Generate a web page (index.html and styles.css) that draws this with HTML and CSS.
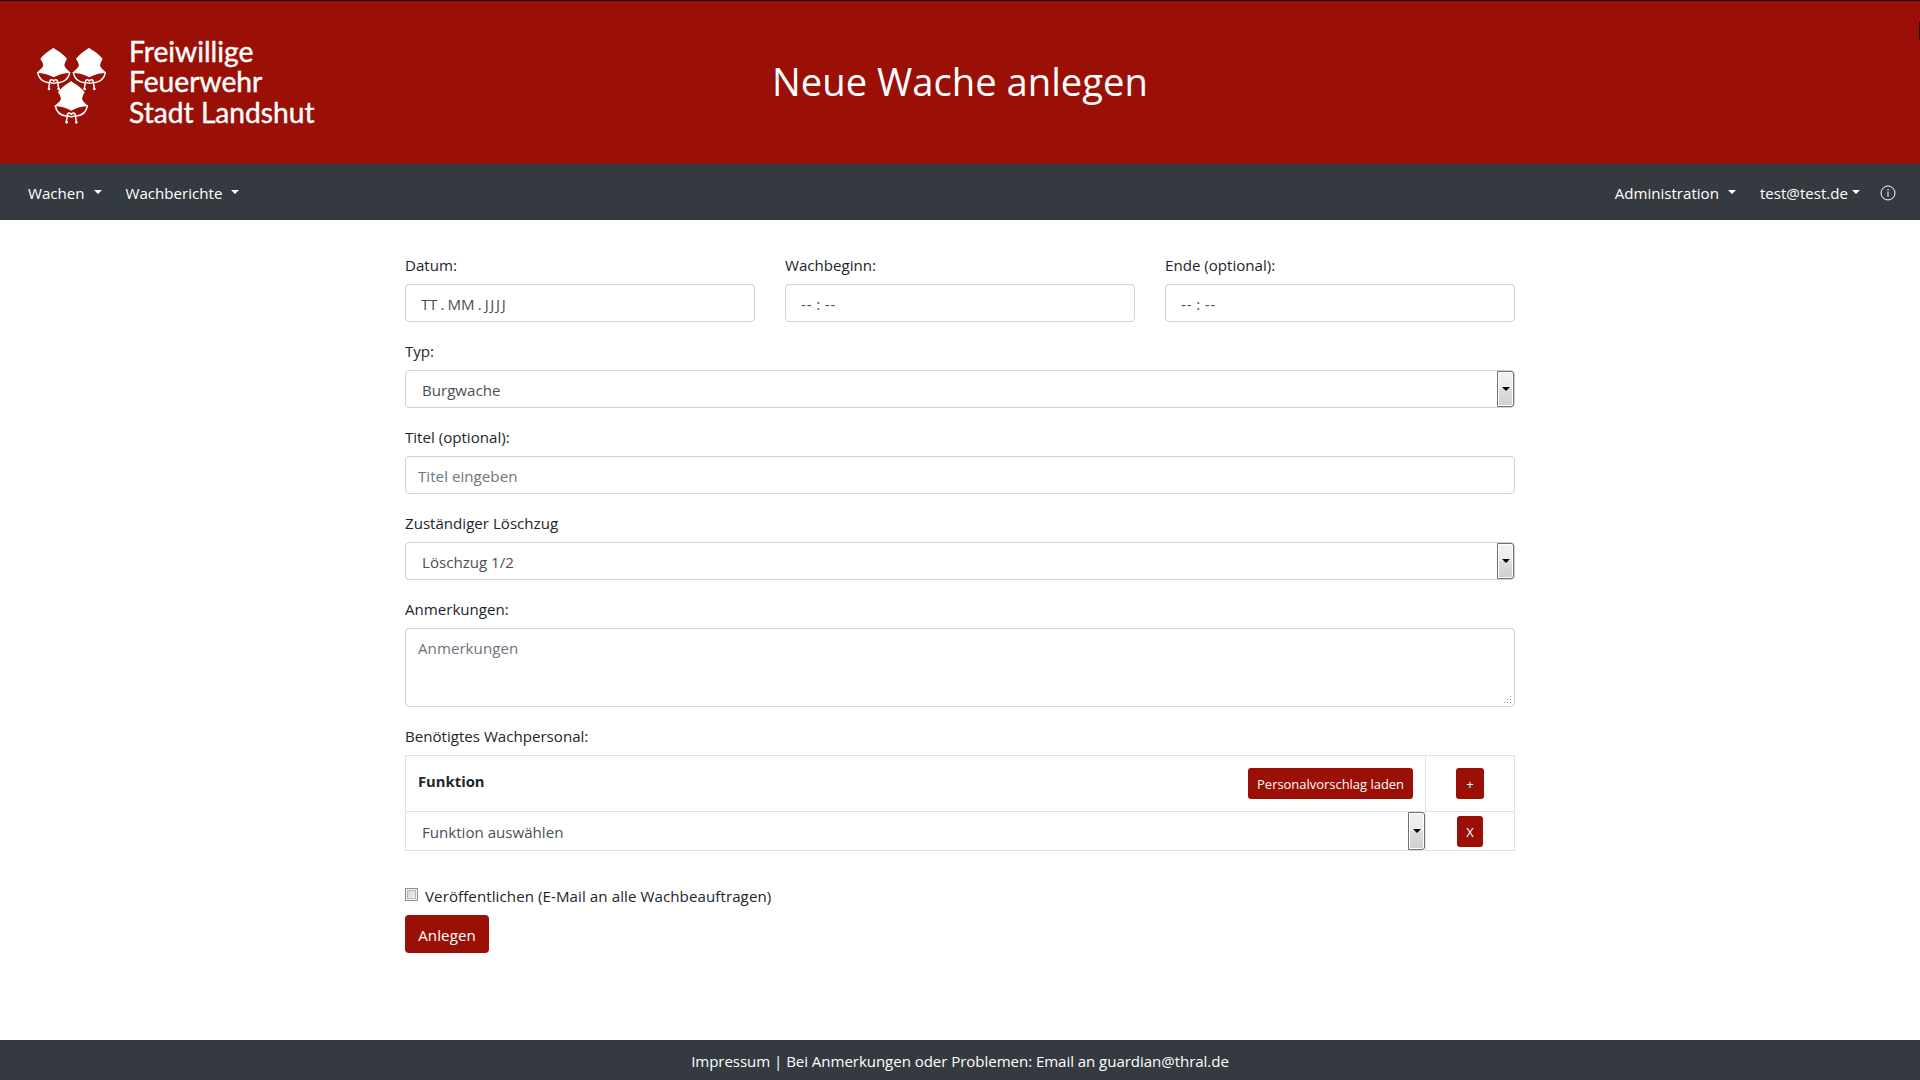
FILE: index.html
```
<!DOCTYPE html>
<html lang="de">
<head>
<meta charset="utf-8">
<title>Neue Wache anlegen</title>
<link rel="stylesheet" href="styles.css">
</head>
<body>
<header class="banner">
  <div class="brand">
    <svg class="brand-mark" viewBox="108 141 213 231" aria-hidden="true">
      <defs>
        <g id="hat">
          <path fill="#fff" d="M160 143C166 149 188 158 201 177Q194 187 193 196C195 204 203 210 212 218Q184 219 161 232Q138 219 110 218C119 210 128 204 130 196Q129 187 121 177C134 158 154 149 160 143Z"/>
          <path fill="none" stroke="#fff" stroke-width="4.5" stroke-linecap="round" d="M113 218Q118 245 146 248M209 218Q204 245 176 248M146 265L149 247C149 237 160 237 161 245C162 237 173 237 173 247L176 265M152 248Q161 252 170 248"/>
          <circle cx="147" cy="267" r="4" fill="#fff"/><circle cx="176" cy="267" r="4" fill="#fff"/>
        </g>
      </defs>
      <use href="#hat"/><use href="#hat" x="107"/><use href="#hat" x="53" y="100"/>
    </svg>
    <div class="brand-name">Freiwillige<br>Feuerwehr<br>Stadt Landshut</div>
  </div>
  <h1 class="title">Neue Wache anlegen</h1>
  <span class="edge-mark"></span>
</header>
<nav class="navbar">
  <div class="nav-group">
    <a class="nav-link">Wachen<i class="caret"></i></a>
    <a class="nav-link">Wachberichte<i class="caret"></i></a>
  </div>
  <div class="nav-group">
    <a class="nav-link">Administration<i class="caret"></i></a>
    <a class="nav-link tight">test@test.de<i class="caret"></i></a>
    <a class="nav-link">
      <svg class="info" viewBox="0 0 16 16"><circle cx="8" cy="8" r="7" fill="none" stroke="currentColor"/><path fill="currentColor" d="M7.4 4h1.3v1.3H7.4zM7.5 6.5h1v5.2h-1z"/></svg>
    </a>
  </div>
</nav>
<main class="content">
  <div class="row">
    <div class="group"><label>Datum:</label><div class="field inset"><span class="date"><span>TT</span><span>.</span><span>MM</span><span>.</span><span class="year">JJJJ</span></span></div></div>
    <div class="group"><label>Wachbeginn:</label><div class="field inset"><span class="time"><span>--</span><span>:</span><span>--</span></span></div></div>
    <div class="group"><label>Ende (optional):</label><div class="field inset"><span class="time"><span>--</span><span>:</span><span>--</span></span></div></div>
  </div>
  <div class="group"><label>Typ:</label><div class="field select">Burgwache<span class="drop"></span></div></div>
  <div class="group"><label>Titel (optional):</label><div class="field placeholder">Titel eingeben</div></div>
  <div class="group"><label>Zuständiger Löschzug</label><div class="field select">Löschzug 1/2<span class="drop"></span></div></div>
  <div class="group"><label>Anmerkungen:</label><div class="field area placeholder">Anmerkungen
    <svg class="grip" viewBox="0 0 8 8" shape-rendering="crispEdges"><path fill="#888" d="M6 0h1v1H6zM3 3h1v1H3zM6 3h1v1H6zM0 6h1v1H0zM3 6h1v1H3zM6 6h1v1H6z"/></svg></div></div>
  <div class="group staff">
    <label>Benötigtes Wachpersonal:</label>
    <div class="table">
      <div class="cell head"><b>Funktion</b><span class="btn small">Personalvorschlag laden</span></div>
      <div class="cell action"><span class="btn small plus">+</span></div>
      <div class="cell select">Funktion auswählen<span class="drop"></span></div>
      <div class="cell action"><span class="btn small remove">X</span></div>
    </div>
  </div>
  <div class="publish"><span class="checkbox"></span><span>Veröffentlichen (E-Mail an alle Wachbeauftragen)</span></div>
  <span class="btn submit">Anlegen</span>
</main>
<footer class="footer">Impressum | Bei Anmerkungen oder Problemen: Email an guardian@thral.de</footer>
</body>
</html>
```
FILE: styles.css
```
* { box-sizing: border-box; }

body {
  margin: 0;
  height: 1080px;
  overflow: hidden;
  display: flex;
  flex-direction: column;
  background: #fff;
  color: #212529;
  font: 15.1px/24px "Open Sans", "Noto Sans", sans-serif;
}

.banner {
  position: relative;
  height: 164px;
  flex: none;
  display: grid;
  grid-template-columns: 1fr auto 1fr;
  align-items: center;
  border-top: 1px solid #1c0000;
  background: #9b1006;
  color: #fff;
}
.brand { display: flex; align-items: center; gap: 22px; padding: 0 0 2px 36px; }
.brand-mark { width: 71px; height: 77px; margin-top: 7px; }
.brand-name {
  font: 28.2px/30.5px Lato, "Open Sans", sans-serif;
  -webkit-text-stroke: 0.4px #fff;
}
.title {
  margin: 0;
  padding-bottom: 4px;
  font-size: 38.2px;
  font-weight: 400;
  line-height: 48px;
}
.edge-mark {
  position: absolute;
  top: 21px;
  right: 0;
  width: 1px;
  height: 18px;
  background: #1c0000;
}

.navbar {
  height: 56px;
  flex: none;
  display: flex;
  justify-content: space-between;
  padding: 1px 24px 0 28px;
  background: #343a40;
  color: #fff;
}
.nav-group { display: flex; gap: 24px; align-items: center; }
.nav-link { display: flex; align-items: center; }
.caret {
  margin: -2px 0 0 9px;
  border: 4.5px solid transparent;
  border-top-color: currentColor;
  border-bottom: 0;
}
.tight .caret { margin-left: 4px; }
.info { width: 16px; height: 16px; margin-left: -4px; }

.content {
  width: 1110px;
  flex: 1;
  margin: 0 auto;
  padding-top: 32px;
}
.row { display: grid; grid-template-columns: repeat(3, 1fr); gap: 30px; }
.group { margin-bottom: 16px; }
label { display: block; margin-bottom: 8px; padding-top: 1px; height: 24px; }
.field {
  position: relative;
  height: 38px;
  padding: 7px 12px;
  border: 1px solid #ced4da;
  border-radius: 4px;
  color: #495057;
}
.inset { padding-left: 15px; }
.date, .time { display: flex; }
.date { gap: 3.3px; letter-spacing: -0.2px; }
.year { letter-spacing: 1.6px; }
.time { gap: 3.5px; letter-spacing: 1px; }
.select {
  display: flex;
  justify-content: space-between;
  padding: 7px 0 0 16px;
  color: #495057;
}
.drop {
  width: 17px;
  height: 36px;
  margin-top: -7px;
  display: grid;
  place-items: center;
  border: 1px solid #707070;
  border-radius: 0 3px 3px 0;
  box-shadow: inset 0 0 0 1px #fff;
  background: linear-gradient(#f2f2f2, #ebebeb 50%, #dddddd 50%, #cfcfcf);
}
.drop::after {
  content: "";
  border: 4px solid transparent;
  border-top-color: #000;
  border-bottom: 0;
}
.area { height: 79px; }
.placeholder { color: #6c757d; letter-spacing: 0.04px; }
.grip { position: absolute; right: 2px; bottom: 2px; width: 8px; height: 8px; }

.table {
  display: grid;
  grid-template-columns: 1020px 89px;
  grid-template-rows: 56px 39px;
  border: 1px solid #dee2e6;
  border-width: 1px 0 0 1px;
}
.cell { border: 1px solid #dee2e6; border-width: 0 1px 1px 0; }
.head { display: flex; justify-content: space-between; padding: 12px 12px 0; }
.head b { font-size: 14.8px; line-height: 26px; }
.action { display: grid; place-items: center; }
.cell.select { padding-top: 8px; }
.cell .drop { height: 38px; margin-top: -8px; }

.btn {
  display: inline-block;
  border-radius: 4px;
  background: #9b1006;
  color: #fff;
}
.small {
  height: 31px;
  padding: 4px 9px;
  border-radius: 3px;
  font-size: 12.95px;
}
.plus { width: 28px; }
.remove { width: 26px; }
.small.plus, .small.remove { padding: 4px 0; text-align: center; }

.publish {
  display: flex;
  gap: 7px;
  margin-top: 33px;
  height: 31px;
  letter-spacing: 0.08px;
}
.checkbox {
  width: 13px;
  height: 13px;
  margin-top: 4px;
  border: 1px solid #8e8f8f;
  box-shadow: inset 0 0 0 1px #f4f4f4, inset 0 0 0 2px #b5b8bc;
  background: linear-gradient(135deg, #cfd2d6, #f6f6f6);
}
.submit { width: 84px; height: 38px; padding: 8px 0; text-align: center; letter-spacing: 0.1px; }

.footer {
  height: 40px;
  flex: none;
  padding-top: 9px;
  background: #343a40;
  color: #fff;
  text-align: center;
  letter-spacing: -0.07px;
}
```
